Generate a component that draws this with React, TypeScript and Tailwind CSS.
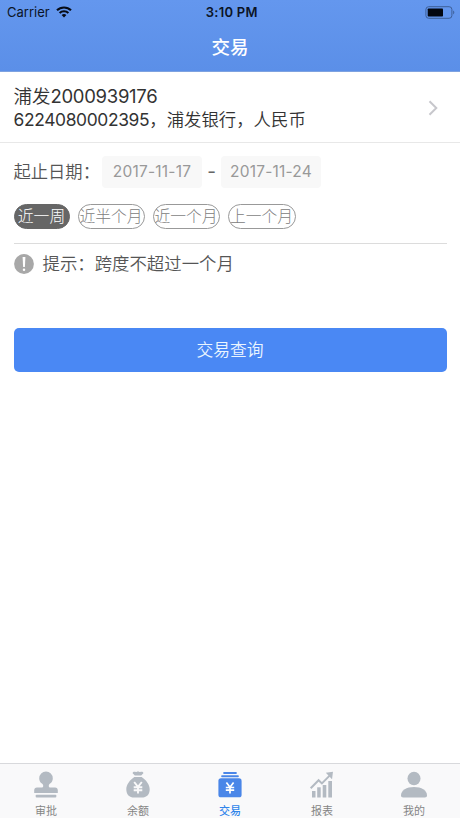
import type { ReactNode } from "react";

const chips = [
  { label: "近一周", active: true, size: "w-14" },
  { label: "近半个月", active: false, size: "w-[67px]" },
  { label: "近一个月", active: false, size: "w-[67px]" },
  { label: "上一个月", active: false, size: "w-[68px]" },
];

function StatusBar() {
  return (
    <div className="grid h-6 grid-cols-3 items-center pl-[7px] pr-[5.5px] text-[#0b1426]">
      <div className="flex items-center gap-1.5">
        <span className="text-[13px] leading-6">Carrier</span>
        <svg width="16" height="12" viewBox="0 0 16 12" fill="none" stroke="#060b16" strokeWidth="2.1">
          <path d="M1 4.3a10 10 0 0 1 14 0" />
          <path d="M3.6 7.1a6.3 6.3 0 0 1 8.8 0" />
          <path d="M5.6 9.1a3.5 3.5 0 0 1 4.8 0L8 11.6z" fill="#060b16" stroke="none" />
        </svg>
      </div>
      <span className="pl-[2px] text-center text-[13px] font-semibold leading-6 tracking-[0.25px]">3:10 PM</span>
      <svg className="justify-self-end" width="30" height="13" viewBox="0 0 30 13">
        <rect x="0.9" y="0.7" width="26" height="11.6" rx="2.8" fill="none" stroke="#3d5f98" strokeWidth="1" />
        <rect x="2.7" y="2.4" width="15.3" height="8.2" rx="0.8" fill="#030710" />
        <path d="M28.2 4.6c1.5.7 1.5 3.1 0 3.8z" fill="#3d5f98" />
      </svg>
    </div>
  );
}

function DateBox({ children }: { children: ReactNode }) {
  return (
    <div className="flex h-8 w-[100px] items-center justify-center rounded-[4px] bg-[#f8f8f8] text-[15.5px] tracking-[0.2px] text-[#999]">
      {children}
    </div>
  );
}

function StampIcon() {
  return (
    <svg width="28" height="28" viewBox="0 0 28 28" fill="#b3bac2">
      <path d="M14 .6a6.8 6.8 0 0 0-6.800 6.800c0 2.300 1.200 4 2.700 5.100 1 .8 1.300 1.500 1.300 2.400 0 1.100-.7 1.500-1.800 1.500H5c-1.800 0-2.800 1.200-2.800 2.800V22h23.600v-2.800c0-1.600-1-2.800-2.800-2.800h-4.400c-1.100 0-1.800-.4-1.800-1.500 0-.9.3-1.600 1.300-2.400 1.500-1.100 2.700-2.800 2.700-5.100A6.800 6.800 0 0 0 14 .6z" />
      <rect x="3.700" y="23.700" width="20.600" height="2.800" rx="0.800" />
    </svg>
  );
}

function BagIcon() {
  return (
    <svg width="28" height="28" viewBox="0 0 28 28" fill="#b3bac2">
      <path d="M9 1.200c1.400-.9 2.500.1 3.500-.3s2-.4 3 0 2.100-.6 3.500.3c.7.500.2 1.400-.4 1.900l-1.400 1.400h-6.400L9.400 3.100C8.800 2.600 8.300 1.700 9 1.200z" />
      <path d="M10.300 5.900h7.400c4.200 2.800 8 7.500 8 12.300 0 5.200-3 8.400-8 8.400h-7.400c-5 0-8-3.200-8-8.400 0-4.800 3.800-9.500 8-12.300z" />
      <path d="M10.200 11l3.800 4.900 3.800-4.900M9.700 16.300h8.600M9.700 19.300h8.600M14 15.800v6.800" fill="none" stroke="#f9f9fa" strokeWidth="1.900" />
    </svg>
  );
}

function WalletIcon() {
  return (
    <svg width="28" height="28" viewBox="0 0 28 28" fill="#4a86e8">
      <rect x="7.200" y="1" width="13.600" height="2" rx="0.800" />
      <rect x="5.200" y="4.200" width="17.600" height="2" rx="0.800" />
      <rect x="2.400" y="7.300" width="23.200" height="19" rx="2.600" />
      <path d="M10.400 11.600l3.600 4.600 3.600-4.600M9.800 16.500h8.400M9.800 19.200h8.400M14 16v6.400" fill="none" stroke="#fff" strokeWidth="1.700" />
    </svg>
  );
}

function ReportIcon() {
  return (
    <svg width="28" height="28" viewBox="0 0 28 28" fill="#b3bac2">
      <rect x="4" y="20" width="3.500" height="6.500" />
      <rect x="9.200" y="16.300" width="3.500" height="10.200" />
      <rect x="14.700" y="14" width="3.600" height="12.500" />
      <rect x="20.300" y="10" width="3.700" height="16.500" />
      <path d="M2.700 17.300l7.900-8.100 3.300 3.200 8.500-8.500" fill="none" stroke="#b3bac2" strokeWidth="2" />
      <path d="M17.800 1.700l7.200-1-1 7.500z" />
    </svg>
  );
}

function PersonIcon() {
  return (
    <svg width="28" height="28" viewBox="0 0 28 28" fill="#b3bac2">
      <ellipse cx="14" cy="7.500" rx="6.500" ry="6.800" />
      <path d="M1 24.200c0-4.800 5.500-8.300 13-8.300s13 3.500 13 8.300c0 1.500-.8 2.200-2.200 2.200H3.200C1.800 26.400 1 25.700 1 24.200z" />
    </svg>
  );
}

const tabs = [
  { label: "审批", icon: <StampIcon />, active: false },
  { label: "余额", icon: <BagIcon />, active: false },
  { label: "交易", icon: <WalletIcon />, active: true },
  { label: "报表", icon: <ReportIcon />, active: false },
  { label: "我的", icon: <PersonIcon />, active: false },
];

export default function App() {
  return (
    <div className="flex h-[818px] w-[460px] flex-col overflow-hidden whitespace-nowrap bg-white font-['Inter','Noto_Sans_CJK_SC',sans-serif]">
      <header className="h-[71.5px] shrink-0 border-b border-[#7ea2e0] bg-linear-to-b from-[#6497ee] to-[#5b8fe8]">
        <StatusBar />
        <h1 className="text-center text-[18.5px] font-medium leading-[47px] text-white">交易</h1>
      </header>

      <section className="flex h-[71.5px] shrink-0 items-center justify-between border-b border-[#e8e8e8] pl-[13.5px] pr-[22px]">
        <div className="pt-[3px] text-[#333]">
          <p className="text-[18.5px] font-[350] leading-[23px]">
            浦发<span className="font-normal tracking-[-0.3px]">2000939176</span>
          </p>
          <p className="text-[17.4px] font-[350] leading-[23px]">
            <span className="font-normal tracking-[-0.35px]">6224080002395</span>，浦发银行，人民币
          </p>
        </div>
        <svg className="mt-0.5" width="10" height="16" viewBox="0 0 10 16" fill="none" stroke="#c7c7cc" strokeWidth="2">
          <path d="M1.5 1.3L8.300 8l-6.800 6.700" />
        </svg>
      </section>

      <main className="grow px-[13.5px] pt-[13px]">
        <div className="flex h-8 items-center">
          <span className="w-[88.5px] text-[17.3px] font-[350] text-[#555]">起止日期：</span>
          <DateBox>2017-11-17</DateBox>
          <span className="w-[19px] pt-px text-center text-[19px] text-[#666]">-</span>
          <DateBox>2017-11-24</DateBox>
        </div>

        <div className="mt-4 flex gap-2">
          {chips.map((chip) => (
            <button
              key={chip.label}
              className={`flex h-[25px] items-center justify-center rounded-full border text-[15.8px] font-light ${chip.size} ${
                chip.active ? "border-[#666] bg-[#666] text-white" : "border-[#999] text-[#808080]"
              }`}
            >
              {chip.label}
            </button>
          ))}
        </div>

        <div className="mt-[13.5px] flex items-center gap-[9px] border-t border-[#dcdcdc] pt-2">
          <svg width="20" height="20" viewBox="0 0 20 20">
            <circle cx="10" cy="10" r="9.9" fill="#a8a8a8" />
            <path d="M8.600 3h2.800l-.5 10H9.100z" fill="#fff" />
            <circle cx="10" cy="15.700" r="1.250" fill="#fff" />
          </svg>
          <span className="text-[17.4px] font-[350] leading-6 text-[#555]">提示：跨度不超过一个月</span>
        </div>

        <button className="mt-[52px] flex h-11 w-full items-center justify-center rounded-[5px] bg-[#4a88f4] pt-[3px] text-[16.8px] font-[350] text-[#eaf5ff]">
          交易查询
        </button>
      </main>

      <nav className="grid h-[55px] shrink-0 grid-cols-5 border-t border-[#d8d9dc] bg-[#f9f9fa]">
        {tabs.map((tab) => (
          <a key={tab.label} className="flex flex-col items-center pt-[7px]">
            {tab.icon}
            <span className={`mt-[3.5px] text-[11px] leading-4 ${tab.active ? "font-medium text-[#3085ea]" : "text-[#858585]"}`}>
              {tab.label}
            </span>
          </a>
        ))}
      </nav>
    </div>
  );
}
